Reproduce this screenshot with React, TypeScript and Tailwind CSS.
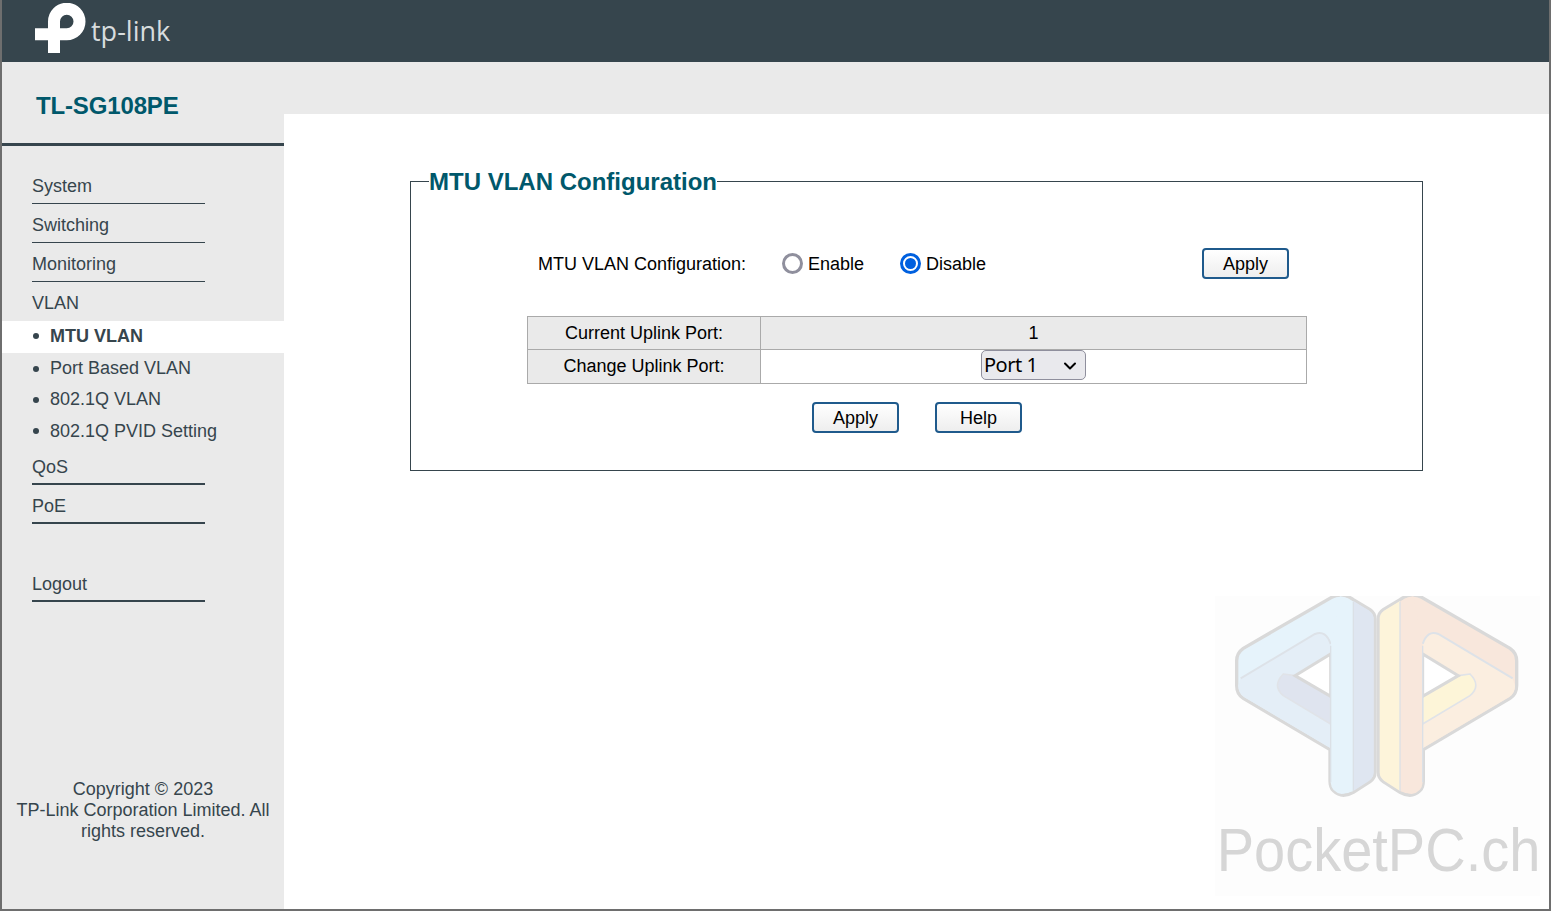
import { ChevronDown } from "lucide-react"

const topItems = ["System", "Switching", "Monitoring"]
const subItems = [
  { label: "MTU VLAN", active: true, h: "h-[32px] pb-[2px]" },
  { label: "Port Based VLAN", active: false, h: "h-[31px]" },
  { label: "802.1Q VLAN", active: false, h: "h-[31px]" },
  { label: "802.1Q PVID Setting", active: false, h: "h-[31px] pt-[1px]" },
]

const Logo = () => (
  <svg width="51" height="51" viewBox="0 0 51 51" className="mt-[3px] shrink-0">
    <path d="M19 50V18.5A12.75 12.75 0 1 1 31.75 31.25H0" fill="none" stroke="#ffffff" strokeWidth="12" />
  </svg>
)

const MarkHalf = ({ c1, c2, c3, c4, flip }: { c1: string; c2: string; c3: string; c4: string; flip?: boolean }) => (
  <g transform={flip ? "translate(1060 0) scale(-1 1)" : undefined}>
    <path
      d="M420 48Q440 48 460 62L510 92Q525 102 525 120L525 580Q525 598 510 608L460 640Q425 660 400 635Q390 625 390 605L390 512L130 358Q110 345 110 320L110 245Q110 222 130 208L395 55Q408 48 420 48Z"
      fill={c1}
      stroke="#d9d9d9"
      strokeWidth="10"
    />
    <path d="M460 66L508 95Q521 104 521 120L521 580Q521 595 508 605L460 636Z" fill={c2} />
    <path d="M122 298L345 165Q378 152 392 195L392 508L132 354Q115 342 115 320Z" fill={c3} />
    <path d="M250 285L285 290L392 352L392 435L250 350Q215 320 250 285Z" fill={c4} stroke="#e0e3e8" strokeWidth="5" />
    <path d="M122 298L345 165Q378 152 392 195" fill="none" stroke="#dde2e8" strokeWidth="6" />
    <path d="M285 290L392 225L392 352Z" fill="#ffffff" stroke="#d9d9d9" strokeWidth="9" />
    <path d="M392 200V610Q394 640 425 645L460 636V70Q445 55 420 52" fill={c1} />
    <path d="M392 200V610M460 68V636" fill="none" stroke="#dbe0e6" strokeWidth="4" />
  </g>
)

const Watermark = () => (
  <div className="absolute right-[9px] bottom-[13px] w-[325px] h-[300px] bg-[#fdfdfd] flex flex-col items-center overflow-hidden">
    <svg width="351" height="235" viewBox="0 0 1053 705" className="shrink-0 ml-[-4px] mt-[-17px]">
      <MarkHalf c1="#e6f3fb" c2="#dfe6f1" c3="#e4eef7" c4="#dfe4ef" />
      <MarkHalf c1="#f8e7dc" c2="#fdf4da" c3="#fbeee0" c4="#fdf5d8" flip />
    </svg>
    <span className="mt-[4px] ml-[2px] font-['Liberation_Sans',sans-serif] text-[56px] leading-[63px] text-[#d6d6d6] scale-y-[1.1] whitespace-nowrap">
      PocketPC.ch
    </span>
  </div>
)

const Btn = ({ children }: { children: string }) => (
  <button className="w-[87px] h-[31px] rounded-[4px] border-2 border-[#1f5a8c] bg-gradient-to-b from-white to-[#eeeeee] text-[18px] leading-none text-black">
    {children}
  </button>
)

const Radio = ({ label, on }: { label: string; on?: boolean }) => (
  <div className="flex items-center gap-[5px]">
    <span className={`w-[21px] h-[21px] rounded-full border-[3px] flex items-center justify-center bg-white ${on ? "border-[#0060df]" : "border-[#8f8f9d]"}`}>
      {on && <span className="w-[11px] h-[11px] rounded-full bg-[#0060df]" />}
    </span>
    <span className="pt-[2px]">{label}</span>
  </div>
)

const App = () => {
  return (
    <div className="h-[911px] overflow-hidden flex flex-col border-x-2 border-b-2 border-[#6e6e6e] font-['Liberation_Sans',sans-serif] text-[18px] leading-[21px] text-black">
      <div className="h-[62px] shrink-0 bg-[#36454d] flex items-start pl-[33px]">
        <Logo />
        <span className="ml-[5px] mt-[14px] font-['Open_Sans',sans-serif] font-medium text-[27px] leading-[34px] text-[#d8dcde]">tp-link</span>
      </div>

      <div className="flex flex-1 min-h-0">
        <div className="w-[282px] shrink-0 bg-[#eaeaea] text-[#36454d]">
          <div className="h-[84px] border-b-[3px] border-[#36454d] pl-[34px] pt-[30px] font-bold text-[24px] leading-[28px] tracking-[-0.15px] text-[#00586b]">TL-SG108PE</div>

          <div className="pt-[19px]">
            {topItems.map((t) => (
              <div key={t} className="ml-[30px] w-[173px] h-[39px] pt-[11px] border-b border-[#36454d]">{t}</div>
            ))}
            <div className="ml-[30px] h-[39px] pt-[11px]">VLAN</div>
            {subItems.map((s) => (
              <div key={s.label} className={`${s.h} flex items-center pl-[31px] gap-[11px] ${s.active ? "bg-white font-bold" : ""}`}>
                <span className="w-[6px] h-[6px] rounded-full bg-[#36454d]" />
                <span>{s.label}</span>
              </div>
            ))}
            <div className="ml-[30px] w-[173px] h-[39px] pt-[11px] border-b-2 border-[#36454d]">QoS</div>
            <div className="ml-[30px] w-[173px] h-[39px] pt-[11px] border-b-2 border-[#36454d]">PoE</div>
            <div className="ml-[30px] mt-[39px] w-[173px] h-[39px] pt-[11px] border-b-2 border-[#36454d]">Logout</div>
          </div>

          <div className="mt-[177px] px-[12px] text-center">
            Copyright © 2023
            <br />
            TP-Link Corporation Limited. All rights reserved.
          </div>
        </div>

        <div className="relative flex-1 min-w-0 bg-white">
          <div className="h-[52px] bg-[#eaeaea]" />
          <Watermark />
          <fieldset className="relative ml-[126px] w-[1013px] h-[304px] mt-[53px] border border-[#36454d] p-0">
            <legend className="ml-[18px] p-0 font-bold text-[24px] leading-[28px] translate-y-px text-[#00586b]">MTU VLAN Configuration</legend>

            <div className="mt-[53px] ml-[127px] h-[31px] flex items-center">
              <span className="w-[244px] pt-[2px]">MTU VLAN Configuration:</span>
              <div className="w-[118px]"><Radio label="Enable" /></div>
              <div className="w-[302px]"><Radio label="Disable" on /></div>
              <Btn>Apply</Btn>
            </div>

            <div className="ml-[116px] w-[780px] mt-[37px]">
              <table className="w-full border-collapse text-center">
                <tbody>
                  <tr className="h-[33px] bg-[#eaeaea]">
                    <td className="w-[233px] border border-[#aaaaaa] p-0">Current Uplink Port:</td>
                    <td className="border border-[#aaaaaa] p-0">1</td>
                  </tr>
                  <tr className="h-[34px]">
                    <td className="bg-[#eaeaea] border border-[#aaaaaa] p-0">Change Uplink Port:</td>
                    <td className="border border-[#aaaaaa] p-0">
                      <div className="relative w-[105px] h-[30px] mx-auto mb-[3px]">
                        <select className="appearance-none w-full h-full rounded-[5px] border border-[#8f8f9d] bg-[#e9e9ed] pl-[2px] font-['Noto_Sans',sans-serif] text-[20px] tracking-[-0.5px] leading-none text-black">
                          <option>Port 1</option>
                        </select>
                        <ChevronDown className="absolute right-[6px] top-[6px] w-[20px] h-[20px] text-black pointer-events-none" strokeWidth={2.4} />
                      </div>
                    </td>
                  </tr>
                </tbody>
              </table>
              <div className="flex justify-center gap-[36px] mt-[18px]">
                <Btn>Apply</Btn>
                <Btn>Help</Btn>
              </div>
            </div>
          </fieldset>
        </div>
      </div>
    </div>
  )
}

export default App
